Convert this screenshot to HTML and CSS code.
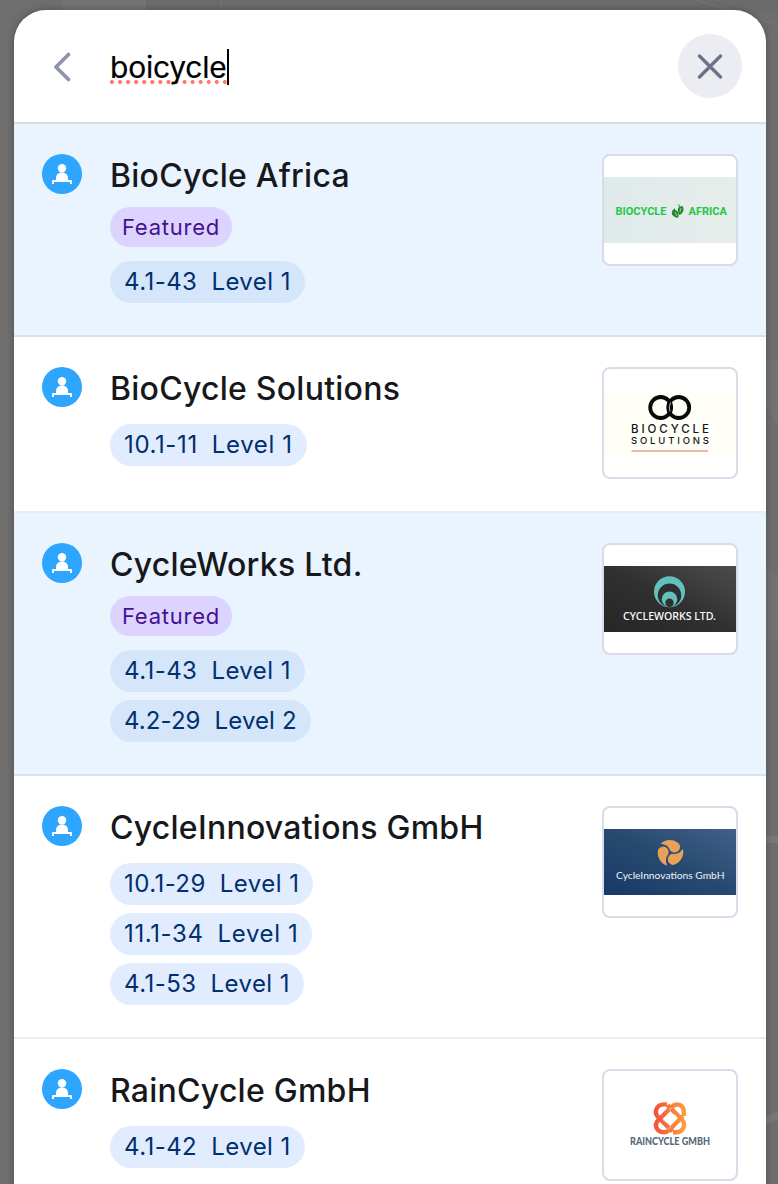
FILE: index.html
```html
<!DOCTYPE html>
<html lang="en">
<head>
<meta charset="utf-8">
<title>Search</title>
<link rel="stylesheet" href="styles.css">
</head>
<body>
<svg class="defs" width="0" height="0" aria-hidden="true">
  <symbol id="person" viewBox="0 0 40 40">
    <circle cx="20" cy="14.200" r="4.200" fill="#fff"/>
    <path d="M14 27v-2.500c0-3.600 2.200-5.900 6-5.900s6 2.300 6 5.900V27z" fill="#fff"/>
    <path d="M11 30V27H29V30" fill="none" stroke="#fff" stroke-width="2" stroke-linejoin="round"/>
  </symbol>
</svg>
<svg class="backdrop" viewBox="0 0 778 1184" aria-hidden="true">
  <rect width="778" height="1184" fill="#6e6e6e"/>
  <path d="M62 0H146V12H62z" fill="#737373"/>
  <path d="M146 0H778V12H146z" fill="#6a6b6c"/>
  <path d="M222 0l-3 12M696 0l82 25" stroke="#777" stroke-width="1"/>
  <path d="M764 405l14 20V360H764zM764 568l14 8v64h-14z" fill="#727272"/>
  <path d="M764 836h14v7h-14zM764 1117l14-5v8l-14 5z" fill="#777"/>
</svg>
<main class="dialog">
  <header class="search">
    <svg class="back" viewBox="0 0 40 40"><path d="M26.500 7.500L14 20l12.500 12.500" fill="none" stroke="#8e95a8" stroke-width="3.800" stroke-linecap="round" stroke-linejoin="round"/></svg>
    <div class="query"><span class="typed">boicycle</span><i class="caret"></i></div>
    <button class="close" aria-label="Close"><svg viewBox="0 0 64 64"><path d="M21.500 22l21 21M42.500 22L21.500 43" fill="none" stroke="#6c7288" stroke-width="3.400" stroke-linecap="round"/></svg></button>
  </header>

  <article class="row featured">
    <svg class="avatar"><use href="#person"/></svg>
    <div class="info">
      <h2 class="name">BioCycle Africa</h2>
      <span class="tag">Featured</span>
      <div class="booths"><span class="booth"><b>4.1-43</b><b>Level 1</b></span></div>
    </div>
    <div class="logo"><svg viewBox="0 0 132 66">
      <defs><linearGradient id="mist"><stop stop-color="#e0eaeb"/><stop offset="1" stop-color="#e6eeeb"/></linearGradient></defs>
      <rect width="132" height="66" fill="url(#mist)"/>
      <g class="mono" fill="#22c744"><text x="11.500" y="38.300" textLength="51" lengthAdjust="spacingAndGlyphs">BIOCYCLE</text><text x="84.500" y="38.300" textLength="38.500" lengthAdjust="spacingAndGlyphs">AFRICA</text></g>
      <g fill="#25892b"><path d="M69 33c4-1 7 3 5 8-5-1-8-4-5-8z"/><path d="M78.500 29c-5 0-6 4-3 9 4-2 5-6 3-9z"/><path d="M68 34l3-3v3M74 29l1-2 1 3" /></g>
      <path d="M71 35l2 4M77 31l-1 4" stroke="#a4dd9b" stroke-width=".9"/>
    </svg></div>
  </article>

  <article class="row">
    <svg class="avatar"><use href="#person"/></svg>
    <div class="info">
      <h2 class="name">BioCycle Solutions</h2>
      <div class="booths"><span class="booth loose"><b>10.1-11</b><b>Level 1</b></span></div>
    </div>
    <div class="logo"><svg viewBox="0 0 132 66">
      <rect width="132" height="66" fill="#fffff8"/>
      <g fill="none" stroke="#080808" stroke-width="3.800"><circle cx="56.700" cy="17.500" r="10.500"/><circle cx="74.700" cy="17.500" r="10.500"/></g>
      <path d="M66.700 12.500a10 10 0 0 0-.7 9" fill="none" stroke="#fffff8" stroke-width=".7"/>
      <g class="geo" fill="#15151a"><text x="27" y="43" textLength="78">BIOCYCLE</text><text x="27" y="54" textLength="78" class="geo-small">SOLUTIONS</text></g>
      <path d="M27.500 61H104" stroke="#f2b7a8" stroke-width="2"/>
    </svg></div>
  </article>

  <article class="row featured">
    <svg class="avatar"><use href="#person"/></svg>
    <div class="info">
      <h2 class="name">CycleWorks Ltd.</h2>
      <span class="tag">Featured</span>
      <div class="booths"><span class="booth"><b>4.1-43</b><b>Level 1</b></span><span class="booth tight"><b>4.2-29</b><b>Level 2</b></span></div>
    </div>
    <div class="logo"><svg viewBox="0 0 132 66">
      <defs><linearGradient id="coal" x1="0" y1="1" x2="1" y2="0"><stop stop-color="#262626"/><stop offset=".5" stop-color="#303030"/><stop offset="1" stop-color="#4b4d4c"/></linearGradient></defs>
      <rect width="132" height="66" fill="url(#coal)"/>
      <circle cx="65.500" cy="25.700" r="15.500" fill="#62c1bd"/><circle cx="65.500" cy="29.300" r="11.700" fill="#303030"/>
      <circle cx="65.500" cy="33.200" r="7.700" fill="#62c1bd"/><circle cx="65.500" cy="36.800" r="4.200" fill="#303030"/>
      <text class="wide" x="19" y="53.800" textLength="93" lengthAdjust="spacingAndGlyphs" fill="#fff">CYCLEWORKS LTD.</text>
    </svg></div>
  </article>

  <article class="row">
    <svg class="avatar"><use href="#person"/></svg>
    <div class="info">
      <h2 class="name">CycleInnovations GmbH</h2>
      <div class="booths"><span class="booth"><b>10.1-29</b><b>Level 1</b></span><span class="booth loose"><b>11.1-34</b><b>Level 1</b></span><span class="booth"><b>4.1-53</b><b>Level 1</b></span></div>
    </div>
    <div class="logo"><svg viewBox="0 0 132 66">
      <defs><linearGradient id="navy" x1="0" y1="1" x2="1" y2="0"><stop stop-color="#183968"/><stop offset=".5" stop-color="#28496f"/><stop offset="1" stop-color="#40608a"/></linearGradient></defs>
      <rect width="132" height="66" fill="url(#navy)"/>
      <g transform="translate(66.300 23.800)" fill="#e9a15a">
        <path id="petal" d="M-9.500-9C-5-13.800 3-14 8.500-9.300A5.500 5.500 0 1 1-.8-3.600C-2.500-7.500-6-8.500-9.500-9z"/>
        <use href="#petal" transform="rotate(120)"/><use href="#petal" transform="rotate(240)"/>
      </g>
      <text class="round" x="12" y="49.500" textLength="108.500" lengthAdjust="spacingAndGlyphs" fill="#eef3fa">CycleInnovations GmbH</text>
    </svg></div>
  </article>

  <article class="row">
    <svg class="avatar"><use href="#person"/></svg>
    <div class="info">
      <h2 class="name">RainCycle GmbH</h2>
      <div class="booths"><span class="booth"><b>4.1-42</b><b>Level 1</b></span></div>
    </div>
    <div class="logo"><svg viewBox="0 0 132 66">
      <defs><linearGradient id="flame" gradientUnits="userSpaceOnUse" x1="50" y1="0" x2="82" y2="0"><stop stop-color="#f2503d"/><stop offset="1" stop-color="#fba13f"/></linearGradient></defs>
      <g fill="none" stroke="url(#flame)" stroke-width="4.400">
        <path d="M63 12.400H60C52 12.400 50 20.500 54 25L68.500 39.500"/>
        <path d="M69 40.200H72C80 40.200 82 32.100 78 27.600L63.500 13.100"/>
        <path d="M79.800 24V20C79.800 12 72 10.500 67.500 15L54.500 28C49.500 33 52.500 40.200 60 40.200c2.500 0 4-1 5.500-2.500L79 24"/>
      </g>
      <path d="M58.700 27.300l3 3M70.300 22.300l3 3M68 15.500l-3 3M67 34.500l-3 3" stroke="#fff" stroke-width=".7"/>
      <text class="heavy" x="26" y="53" textLength="80" lengthAdjust="spacingAndGlyphs" fill="#56697a">RAINCYCLE GMBH</text>
    </svg></div>
  </article>
</main>
</body>
</html>
```
FILE: styles.css
```css
* { box-sizing: border-box; }
body { margin: 0; height: 1184px; overflow: hidden; font-family: Inter, "Liberation Sans", sans-serif; }
.defs { position: absolute; }
.backdrop { position: absolute; z-index: -1; left: 0; top: 0; width: 778px; height: 1184px; }
.dialog { width: 752px; height: 1190px; margin: 10px 0 0 14px; background: #fff; border-radius: 32px 32px 0 0; overflow: hidden; box-shadow: 0 0 7px rgba(0, 0, 0, .28); }
.search { display: flex; align-items: center; height: 114px; padding: 0 24px 0 28px; border-bottom: 2px solid #d9dce6; }
.back { width: 40px; height: 40px; margin-top: 2px; }
.query { display: flex; align-items: center; flex: 1; margin: 2px 0 0 28px; }
.typed { font-size: 30px; line-height: 36px; letter-spacing: -.22px; color: #000; -webkit-text-stroke: .2px #000; background: radial-gradient(circle at 2px 2px, #ff776e 1.7px, transparent 2.300px) 0 31px / 8.070px 4px repeat-x; }
.caret { width: 2px; height: 36px; background: #000; }
.close { width: 64px; height: 64px; padding: 0; border: 0; border-radius: 50%; background: #ebedf3; }
.close svg { display: block; width: 64px; height: 64px; }
.row { display: flex; align-items: flex-start; padding: 30px 28px 32px; border-bottom: 2px solid #ebecf2; }
.row.featured { background: #e9f4ff; border-color: #d0e4ee; }
.avatar { flex: none; width: 40px; height: 40px; border-radius: 50%; background: #2ea5ff; }
.info { flex: 1; display: flex; flex-direction: column; align-items: flex-start; margin-left: 28px; }
.name { margin: 0; font-size: 32px; line-height: 44px; font-weight: 500; letter-spacing: .25px; color: #17181b; white-space: nowrap; }
.tag { height: 40px; margin-top: 9px; padding: 0 12px; border-radius: 20px; background: #dcd4ff; color: #451092; font-size: 22px; line-height: 40px; letter-spacing: .75px; }
.booths { display: flex; flex-direction: column; align-items: flex-start; gap: 8px; margin-top: 13px; }
.tag + .booths { margin-top: 14px; }
.booth { display: flex; gap: 14px; height: 42px; padding: 0 14px; border-radius: 21px; background: #e1ecff; color: #00306e; font-size: 24px; line-height: 41px; letter-spacing: .45px; }
.booth.loose { letter-spacing: .62px; }
.booth.tight { letter-spacing: .1px; }
.featured .booth { background: #d5e5fa; }
.booth b { font-weight: 400; }
.logo { display: flex; align-items: center; width: 136px; height: 112px; border: 2px solid #d9dce8; border-radius: 8px; background: #fff; overflow: hidden; }
.logo svg { width: 132px; height: 66px; }
.mono { font: bold 11px Roboto, sans-serif; }
.geo { font: 500 11.500px Inter, sans-serif; }
.geo-small { font-size: 9.500px; }
.wide { font: 500 10px "Noto Sans", sans-serif; }
.round { font: 9.500px Lato, sans-serif; }
.heavy { font: 900 10.500px Lato, sans-serif; }
```
